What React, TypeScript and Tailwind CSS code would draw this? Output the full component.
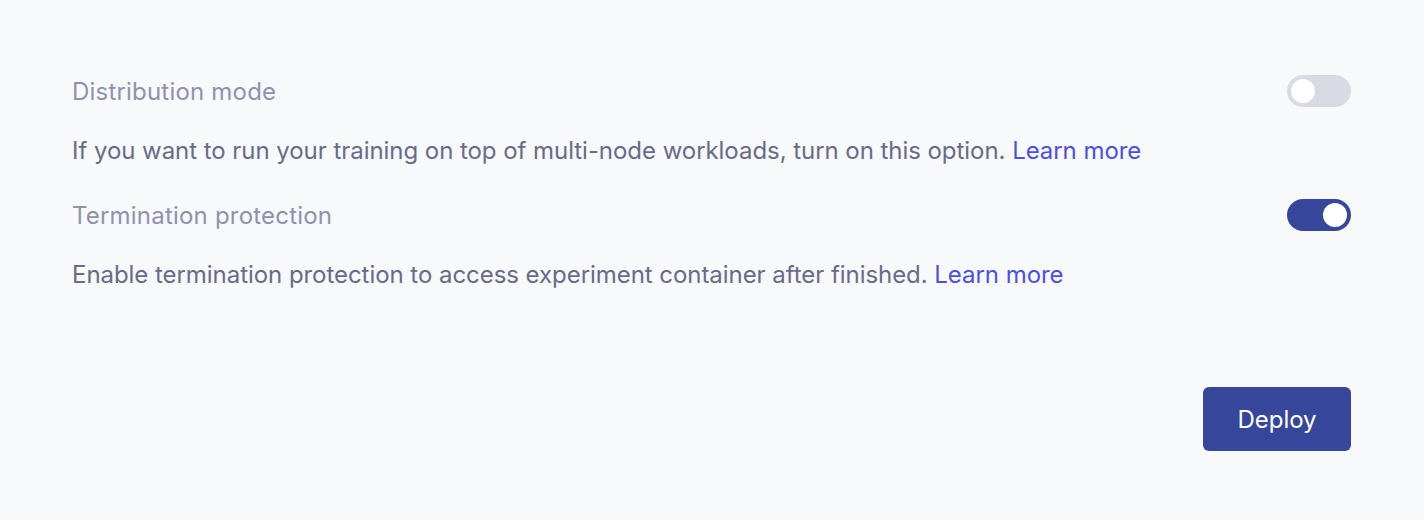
import React, { useState } from "react";

const Toggle: React.FC<{ on: boolean; onChange: () => void }> = ({ on, onChange }) => (
  <button
    onClick={onChange}
    className={`flex h-8 w-16 shrink-0 items-center rounded-full px-1 ${
      on ? "justify-end bg-[#36469a]" : "justify-start bg-[#d9dae4]"
    }`}
  >
    <span className="h-6 w-6 rounded-full bg-white" />
  </button>
);

const Setting: React.FC<{
  title: string;
  text: string;
  on: boolean;
  onChange: () => void;
}> = ({ title, text, on, onChange }) => (
  <div>
    <div className="flex h-8 items-center justify-between">
      <span className="pt-[2px] text-[24px] tracking-[0.2px] text-[#8e92b0]">{title}</span>
      <Toggle on={on} onChange={onChange} />
    </div>
    <p className="mt-[28px] text-[24px] leading-8 tracking-[-0.05px] text-[#676b8a]">
      {text} <a className="text-[#4b4fe6]" href="#">Learn more</a>
    </p>
  </div>
);

const App: React.FC = () => {
  const [distributed, setDistributed] = useState(false);
  const [protection, setProtection] = useState(true);

  return (
    <div
      className="min-h-[520px] bg-[#f8f9fb] pl-[72px] pr-[73px] pt-[75px]"
      style={{ fontFamily: "Inter, 'Noto Sans', sans-serif" }}
    >
      <div className="flex flex-col gap-[32px]">
        <Setting
          title="Distribution mode"
          text="If you want to run your training on top of multi-node workloads, turn on this option."
          on={distributed}
          onChange={() => setDistributed(!distributed)}
        />
        <Setting
          title="Termination protection"
          text="Enable termination protection to access experiment container after finished."
          on={protection}
          onChange={() => setProtection(!protection)}
        />
      </div>
      <div className="mt-[96px] flex justify-end">
        <button className="h-16 w-[148px] rounded-md bg-[#36469a] pt-px text-[24px] text-white">
          Deploy
        </button>
      </div>
    </div>
  );
};

export default App;
